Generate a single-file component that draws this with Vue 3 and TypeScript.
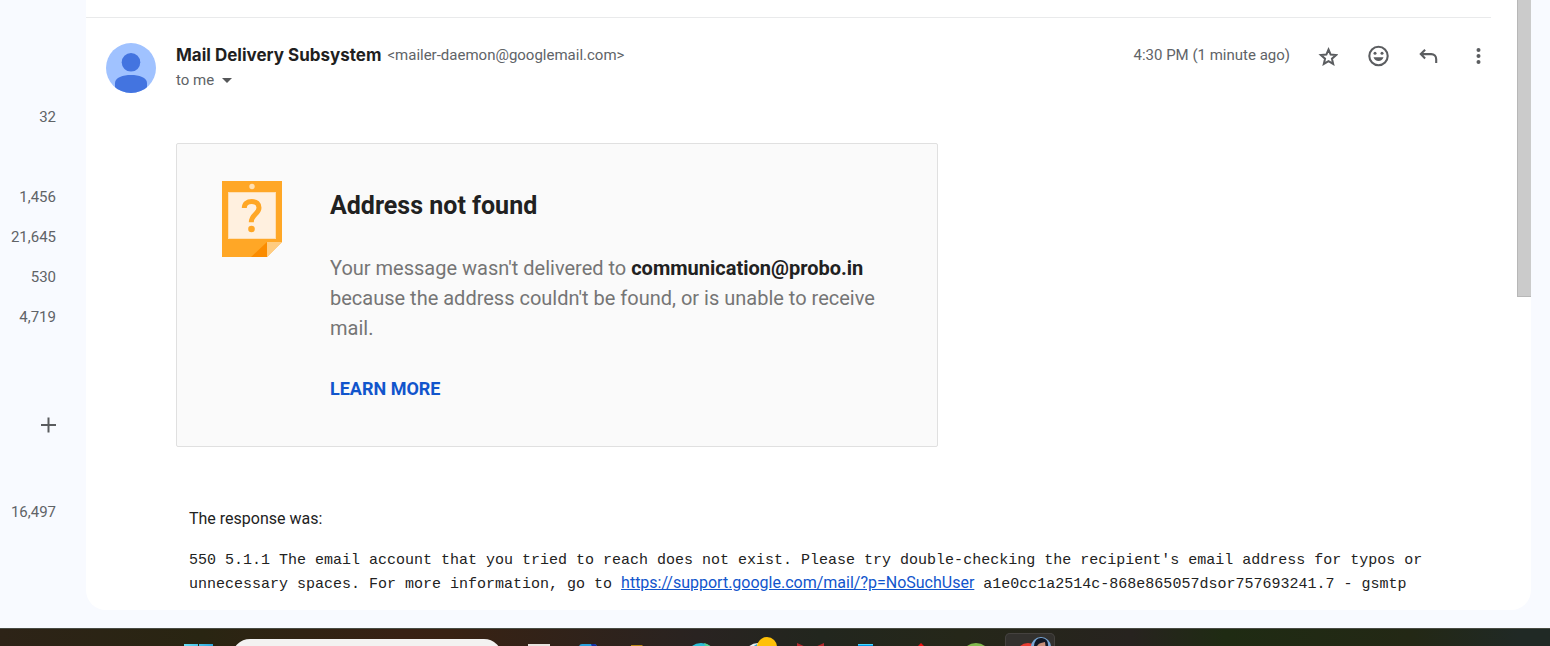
<script setup lang="ts">
interface Counter {
  id: string
  value: string
}

const counters: Counter[] = [
  { id: 'inbox', value: '32' },
  { id: 'category-a', value: '1,456' },
  { id: 'category-b', value: '21,645' },
  { id: 'category-c', value: '530' },
  { id: 'category-d', value: '4,719' },
]
const labelCount = '16,497'
</script>

<template>
  <div class="screen">
    <div class="workspace">
      <aside class="rail">
        <span v-for="c in counters" :key="c.id" class="count" :class="c.id">{{ c.value }}</span>
        <button class="add" type="button" aria-label="Create new label">
          <svg width="16" height="16" viewBox="0 0 16 16"><path d="M8.500 .5v15M1 8h15" stroke="#5a5c5f" stroke-width="2" fill="none" /></svg>
        </button>
        <span class="count label-count">{{ labelCount }}</span>
      </aside>

      <main class="panel">
        <div class="rule"></div>
        <article class="message">
          <svg class="avatar" width="50" height="50" viewBox="0 0 50 50">
            <defs><clipPath id="face"><circle cx="25" cy="25" r="25" /></clipPath></defs>
            <circle cx="25" cy="25" r="25" fill="#a0c2ff" />
            <g clip-path="url(#face)" fill="#4374e0">
              <circle cx="25" cy="19.3" r="9.3" />
              <path d="M9 50V40C9 34.500 17 32 25 32s16 2.500 16 8v10z" />
            </g>
          </svg>
          <div class="body">
            <header class="head">
              <div class="from">
                <div class="sender"><h3>Mail Delivery Subsystem</h3><span>&lt;mailer-daemon@googlemail.com&gt;</span></div>
                <button class="to" type="button" aria-label="Show details">to me
                  <svg width="10" height="5" viewBox="0 0 10 5"><path d="M0 0h10L5 5z" fill="#555759" /></svg>
                </button>
              </div>
              <time class="time">4:30 PM (1 minute ago)</time>
              <div class="actions">
                <button type="button" aria-label="Star">
                  <svg width="20" height="20" viewBox="0 0 20 20"><path d="M10.500 3.500l2.150 5.050 5.450.480-4.150 3.600 1.250 5.350-4.700-2.830-4.700 2.830 1.250-5.350L2.900 9.030l5.450-.480z" fill="none" stroke="#5b5d60" stroke-width="2" /></svg>
                </button>
                <button type="button" aria-label="Add reaction">
                  <svg width="22" height="22" viewBox="0 0 22 22"><circle cx="11.500" cy="11" r="9.200" fill="none" stroke="#5b5d60" stroke-width="2.100" /><circle cx="8" cy="8.300" r="1.500" fill="#5b5d60" /><circle cx="15" cy="8.300" r="1.500" fill="#5b5d60" /><path d="M6.500 12.300h10c-.700 2.300-2.600 3.700-5 3.700s-4.300-1.400-5-3.700z" fill="#5b5d60" /></svg>
                </button>
                <button type="button" aria-label="Reply">
                  <svg width="20" height="20" viewBox="0 0 20 20"><path d="M7.100 3.800L2.800 8.100l4.300 4.300M2.800 8.100h10.400c3 0 5 2.200 5 5.200V17" fill="none" stroke="#5b5d60" stroke-width="2.100" /></svg>
                </button>
                <button type="button" aria-label="More">
                  <svg width="20" height="20" viewBox="0 0 20 20" fill="#5b5d60"><circle cx="10.500" cy="4" r="2" /><circle cx="10.500" cy="10" r="2" /><circle cx="10.500" cy="16" r="2" /></svg>
                </button>
              </div>
            </header>

            <section class="notice">
              <svg class="note-icon" width="60" height="76" viewBox="0 0 60 76">
                <path d="M0 0h60v61L45 76H0z" fill="#ffa726" />
                <path d="M6 11h48v47H6z" fill="#fff0df" />
                <path d="M6 11.500h48M6.500 11v47M53.500 11v47M6 57.500h48" stroke="#ffdfb4" fill="none" />
                <circle cx="30" cy="5.500" r="2.700" fill="#ffe0b2" />
                <path d="M45 61v15H29z" fill="#fb8c00" />
                <path d="M45 61h15L45 76z" fill="#ffcc80" />
                <path d="M22.300 27C22.300 22.700 25.200 20.500 29.800 20.500c4.700 0 7.200 2.400 7.200 6.300 0 6.200-7.700 6.400-7.700 14.500" fill="none" stroke="#ffa726" stroke-width="5" />
                <circle cx="29.500" cy="48" r="3.300" fill="#ffa726" />
              </svg>
              <div class="notice-text">
                <h2>Address not found</h2>
                <p>Your message wasn't delivered to <b>communication@probo.in</b> because the address couldn't be found, or is unable to receive mail.</p>
                <a href="#learn-more">LEARN MORE</a>
              </div>
            </section>

            <section class="response">
              <p class="intro">The response was:</p>
              <p class="trace">550 5.1.1 The email account that you tried to reach does not exist. Please try double-checking the recipient's email address for typos or unnecessary spaces. For more information, go to <a href="#no-such-user">https://support.google.com/mail/?p=NoSuchUser</a> a1e0cc1a2514c-868e865057dsor757693241.7 - gsmtp</p>
            </section>
          </div>
        </article>
        <div class="scroll-thumb"></div>
      </main>
    </div>

    <footer class="taskbar">
      <div class="apps">
        <button type="button" class="app start" aria-label="Start">
          <svg width="30" height="30" viewBox="0 0 30 30"><defs><linearGradient id="win"><stop offset="0" stop-color="#68e0f7" /><stop offset="1" stop-color="#2aa5dc" /></linearGradient></defs><path d="M1 1h14v14H1zM16 1h14v14H16zM1 16h14v14H1zM16 16h14v14H16z" fill="url(#win)" /></svg>
        </button>
        <input class="search" type="text" aria-label="Search" />
        <button type="button" class="app" aria-label="Task view">
          <svg width="30" height="30" viewBox="0 0 30 30"><path d="M7 1h22v18H7z" fill="#e8e3df" /><path d="M12 6h18v18H12z" fill="#817975" /></svg>
        </button>
        <button type="button" class="app" aria-label="Outlook">
          <svg width="30" height="30" viewBox="0 0 30 30"><rect x="3" y="1" width="18" height="26" rx="3" fill="#279fdb" /><path d="M15 1h3q3 0 3 3h-5z" fill="#1630a4" /></svg>
        </button>
        <button type="button" class="app" aria-label="File Explorer">
          <svg width="30" height="30" viewBox="0 0 30 30"><path d="M0 2h11l3 3h14v20H0z" fill="#b98614" /></svg>
        </button>
        <button type="button" class="app" aria-label="Edge">
          <svg width="30" height="30" viewBox="0 0 30 30"><circle cx="15" cy="15" r="15" fill="#2bbfd7" /><path d="M18 0q9 2 11 11l-8-4z" fill="#54cf91" /></svg>
        </button>
        <button type="button" class="app badged" aria-label="Browser with notifications">
          <svg width="44" height="36" viewBox="0 0 44 36"><circle cx="24" cy="20" r="14" fill="#e8f1f4" /><path d="M15 12l8-5v10z" fill="#39a9cf" /><circle cx="33" cy="10" r="10" fill="#ffc107" /></svg>
        </button>
        <button type="button" class="app" aria-label="Security">
          <svg width="30" height="30" viewBox="0 0 30 30"><path d="M1 0l13.500 6L28 0v22l-13.500 7L1 22z" fill="#b6292d" /></svg>
        </button>
        <button type="button" class="app" aria-label="Terminal">
          <svg width="30" height="30" viewBox="0 0 30 30"><path d="M7 1h15v28H7z" fill="#0098e8" /><path d="M7 1h15v1H7z" fill="#45d7ff" /></svg>
        </button>
        <button type="button" class="app" aria-label="Design tool">
          <svg width="30" height="30" viewBox="0 0 30 30"><path d="M15 0l14 14-14 14L1 14z" fill="#ee1111" /></svg>
        </button>
        <button type="button" class="app" aria-label="Downloads">
          <svg width="30" height="30" viewBox="0 0 30 30"><circle cx="15" cy="15" r="15" fill="#80ba4d" /></svg>
        </button>
        <button type="button" class="app current" aria-label="Chrome">
          <svg width="50" height="40" viewBox="0 0 50 40"><circle cx="23" cy="22" r="12" fill="#e83b30" /><circle cx="36" cy="14" r="10" fill="#79a8d7" /><path d="M29 13Q30 4 37 5q7 1 6 9l-2 3H31z" fill="#121825" /><path d="M32 13q2-3 4-3l4-1 1 8h-9z" fill="#c68e78" /></svg>
        </button>
      </div>
      <div class="tray"><span>ENG</span><span class="clock">1</span></div>
    </footer>
  </div>
</template>

<style>
html,
body {
  margin: 0;
  overflow: hidden;
}
</style>

<style scoped>
.screen {
  height: 100vh;
  overflow: hidden;
  display: flex;
  flex-direction: column;
  background: #f8faff;
  font-family: Roboto, "Liberation Sans", sans-serif;
  color: #222;
}
h2, h3, p { margin: 0; }
button {
  border: 0;
  padding: 0;
  background: none;
  font: inherit;
  color: inherit;
}
svg { display: block; flex: none; }
.workspace {
  display: flex;
  flex: none;
  padding: 0 19px 18px 0;
}
.rail {
  width: 56px;
  flex: none;
  margin-right: 30px;
  padding-top: 97px;
  display: flex;
  flex-direction: column;
  align-items: flex-end;
  font-size: 15px;
  line-height: 40px;
  color: #606367;
}
.inbox { margin-bottom: 40px; }
.add { margin-top: 80px; }
.label-count { margin-top: 59px; }
.panel {
  position: relative;
  flex: 1;
  min-width: 0;
  background: #fff;
  border-radius: 0 0 20px 20px;
}
.rule {
  margin: 17px 40px 0 0;
  height: 1px;
  background: #e9eaeb;
}
.message {
  display: flex;
  gap: 20px;
  padding: 25px 28px 13px 20px;
}
.avatar { flex: none; }
.body { flex: 1; min-width: 0; }
.head { display: flex; align-items: flex-start; }
.from { flex: 1; }
.sender {
  display: flex;
  align-items: center;
  gap: 6px;
  line-height: 25px;
  font-size: 15px;
  color: #606367;
}
.sender h3 {
  font-family: Inter, Roboto, sans-serif;
  font-size: 17px;
  font-weight: 700;
  color: #1f1f1f;
}
.to {
  display: flex;
  align-items: center;
  gap: 8px;
  font-size: 15px;
  line-height: 25px;
  color: #606367;
}
.time {
  font-size: 15px;
  line-height: 25px;
  color: #606367;
}
.actions { display: flex; margin-left: 13px; }
.actions button {
  width: 50px;
  height: 26px;
  display: flex;
  align-items: center;
  justify-content: center;
}
.notice {
  box-sizing: border-box;
  max-width: 762px;
  margin-top: 50px;
  padding: 37px 45px 42px;
  display: flex;
  gap: 48px;
  border: 1px solid #e0e0e0;
  border-radius: 2px;
  background: #fafafa;
}
.notice-text { min-width: 0; padding-top: 10px; }
.notice h2 {
  font-size: 25px;
  line-height: 30px;
  font-weight: 700;
  color: #212121;
}
.notice p {
  margin: 32px 0 30px;
  font-size: 20px;
  line-height: 30px;
  color: #757575;
}
.notice b { color: #212121; }
.notice a {
  display: block;
  font-size: 18px;
  line-height: 31px;
  font-weight: 700;
  color: #1155cc;
  text-decoration: none;
}
.response {
  padding: 60px 0 0 13px;
}
.intro { font-size: 16px; line-height: 24px; }
.trace {
  margin-top: 18px;
  font-family: "Liberation Mono", monospace;
  font-size: 15px;
  line-height: 24px;
}
.trace a {
  font-family: Roboto, sans-serif;
  font-size: 16px;
  line-height: 20px;
  color: #1155cc;
}
.scroll-thumb {
  position: absolute;
  top: 0;
  right: 0;
  width: 13px;
  height: 296px;
  border: solid #b7b7b7;
  border-width: 0 0 1px 1px;
  background: #cbcbcb;
}
.taskbar {
  flex: none;
  height: 47px;
  display: flex;
  justify-content: space-between;
  border-top: 1px solid #494b43;
  background: linear-gradient(90deg, #2d2317 0, #292512 13%, #382114 26%, #382213 29%, #292321 45%, #22261e 53%, #252719 62%, #27231f 73%, #1f2b13 79%, #232815 91%, #202925 98%);
}
.apps { display: flex; padding-left: 183px; align-items: flex-start; }
.app {
  flex: none;
  width: 55px;
  padding-top: 14px;
  display: flex;
  justify-content: center;
}
.start { width: 49px; justify-content: flex-start; }
.badged { padding-top: 8px; }
.search {
  box-sizing: border-box;
  width: 270px;
  height: 36px;
  margin: 10px 6px 0 0;
  border: 0;
  border-radius: 18px;
  background: #f3f2f1;
}
.current {
  box-sizing: border-box;
  width: 50px;
  height: 42px;
  margin: 4px 0 0 2px;
  padding: 0;
  border-radius: 5px;
  background: #33312e;
  box-shadow: inset 0 0 0 1px #45423f;
}
.tray {
  display: flex;
  gap: 164px;
  padding-top: 11px;
  font-family: "Open Sans", sans-serif;
  font-size: 15px;
  line-height: 20px;
  color: #fff;
}
</style>
